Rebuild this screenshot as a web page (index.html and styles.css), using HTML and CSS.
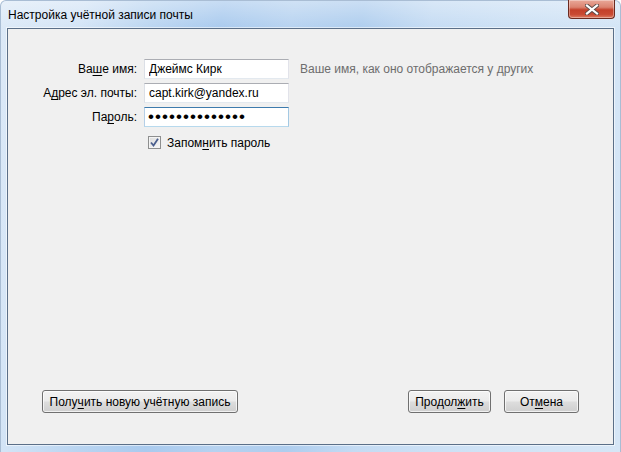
FILE: index.html
```html
<!DOCTYPE html>
<html lang="ru">
<head>
<meta charset="utf-8">
<title>Настройка учётной записи почты</title>
<link rel="stylesheet" href="styles.css">
</head>
<body>
<div class="window">
  <div class="titlebar">
    <div class="title">Настройка учётной записи почты</div>
    <button class="close" aria-label="Закрыть">
      <svg width="14" height="11" viewBox="0 0 14 11">
        <path d="M2 1.5 L12 9.5 M12 1.5 L2 9.5" stroke="#5a4a48" stroke-width="4" stroke-linecap="square" fill="none"/>
        <path d="M2 1.5 L12 9.5 M12 1.5 L2 9.5" stroke="#ffffff" stroke-width="2.2" stroke-linecap="square" fill="none"/>
      </svg>
    </button>
  </div>
  <div class="client">
    <div class="form">
      <label class="label" for="name">Ва<u>ш</u>е имя:</label>
      <input class="field" id="name" type="text" value="Джеймс Кирк">
      <span class="hint">Ваше имя, как оно отображается у других</span>

      <label class="label" for="mail">А<u>д</u>рес эл. почты:</label>
      <input class="field" id="mail" type="text" value="capt.kirk@yandex.ru">
      <span></span>

      <label class="label" for="pass">Па<u>р</u>оль:</label>
      <input class="field focused" id="pass" type="password" value="12345678901234">
      <span></span>

      <span></span>
      <label class="remember">
        <span class="check">
          <svg width="9" height="9" viewBox="0 0 9 9"><path d="M1 4.5 L3.5 7.5 L8 0.8" stroke="#4b5f8e" stroke-width="1.8" fill="none"/></svg>
        </span>
        <span>Запом<u>н</u>ить пароль</span>
      </label>
      <span></span>
    </div>
    <div class="buttons">
      <button class="btn new">Полу<u>ч</u>ить новую учётную запись</button>
      <div class="right">
        <button class="btn next">Продол<u>ж</u>ить</button>
        <button class="btn cancel">От<u>м</u>ена</button>
      </div>
    </div>
  </div>
</div>
</body>
</html>
```
FILE: styles.css
```css
html, body {
  margin: 0;
  padding: 0;
  background: #ffffff;
}
body {
  font-family: "Liberation Sans", Arial, sans-serif;
  font-size: 12px;
  color: #000;
}
.window {
  width: 621px;
  height: 452px;
  box-sizing: border-box;
  display: flex;
  flex-direction: column;
  border-radius: 6px 6px 0 0;
  border: 1px solid #a9bdd4;
  border-bottom: none;
  background:
    linear-gradient(180deg, rgba(255,255,255,0.35) 0px, rgba(255,255,255,0) 28px),
    linear-gradient(100deg, #dce9f7 0%, #d3e4f6 12%, #bad5f1 22%, #a9caee 32%, #b6d2f0 42%, #aecdee 52%, #c4dbf3 62%, #cde1f5 75%, #d4e5f6 90%, #d6e6f6 100%);
}
.titlebar {
  height: 27px;
  display: flex;
  justify-content: space-between;
  align-items: flex-start;
  padding: 0 5px 0 7px;
}
.title {
  padding-top: 6px;
  line-height: 16px;
  color: #000;
}
.close {
  width: 47px;
  height: 19px;
  margin-top: -1px;
  padding: 0;
  border: 1px solid #6b2a20;
  border-top: none;
  border-radius: 0 0 4px 4px;
  background: linear-gradient(180deg, #e9a899 0%, #db8370 40%, #c4402a 55%, #c94a33 80%, #de7c62 100%);
  box-shadow: inset 0 0 0 1px rgba(255,255,255,0.35);
  display: flex;
  align-items: center;
  justify-content: center;
}
.client {
  flex: 1;
  margin: 0 6px 7px 6px;
  border: 1px solid #5b6f88;
  box-shadow: 0 0 0 1px rgba(255,255,255,0.55);
  background: #f0f0f0;
  display: flex;
  flex-direction: column;
  justify-content: space-between;
  padding: 30px 0 31px 0;
}
.form {
  display: grid;
  grid-template-columns: 129px 145px 1fr;
  column-gap: 7px;
  row-gap: 4px;
  grid-template-rows: 20px 20px 20px 20px;
  align-items: center;
}
.form .remember { margin-top: 3px; }
.label {
  text-align: right;
  color: #000;
}
u { text-decoration-thickness: 1px; text-underline-offset: 2px; }
.field {
  box-sizing: border-box;
  width: 145px;
  height: 20px;
  margin: 0;
  padding: 0 4px;
  font: inherit;
  color: #000;
  background: #fff;
  border: 1px solid;
  border-color: #abadb3 #e2e3ea #e3e9ef #dbdfe6;
  outline: none;
}
.field.focused {
  border-color: #3d7bad #a4c9e3 #b7d9ed #b5cfe7;
  font-size: 17px;
  letter-spacing: 1.05px;
  padding-left: 3px;
}
.hint {
  color: #6d6d6d;
  padding-left: 4px;
}
.remember {
  display: flex;
  align-items: center;
  gap: 6px;
  padding-left: 4px;
}
.check {
  width: 11px;
  height: 11px;
  border: 1px solid #8e8f8f;
  background: linear-gradient(135deg, #dcdcdc, #f8f8f8);
  box-shadow: inset 0 0 0 1px #f4f4f4;
  display: flex;
  align-items: center;
  justify-content: center;
}
.buttons {
  display: flex;
  justify-content: space-between;
  padding: 0 34px 0 34px;
}
.right {
  display: flex;
  gap: 13px;
}
.btn {
  height: 23px;
  box-sizing: border-box;
  padding: 0 4px;
  font: inherit;
  white-space: nowrap;
  color: #000;
  border: 1px solid #707070;
  border-radius: 3px;
  background: linear-gradient(180deg, #f2f2f2 0%, #ebebeb 48%, #dddddd 52%, #cfcfcf 100%);
  box-shadow: inset 0 0 0 1px rgba(255,255,255,0.7);
}
.btn.new { width: 196px; }
.btn.next { width: 83px; }
.btn.cancel { width: 75px; }
```
